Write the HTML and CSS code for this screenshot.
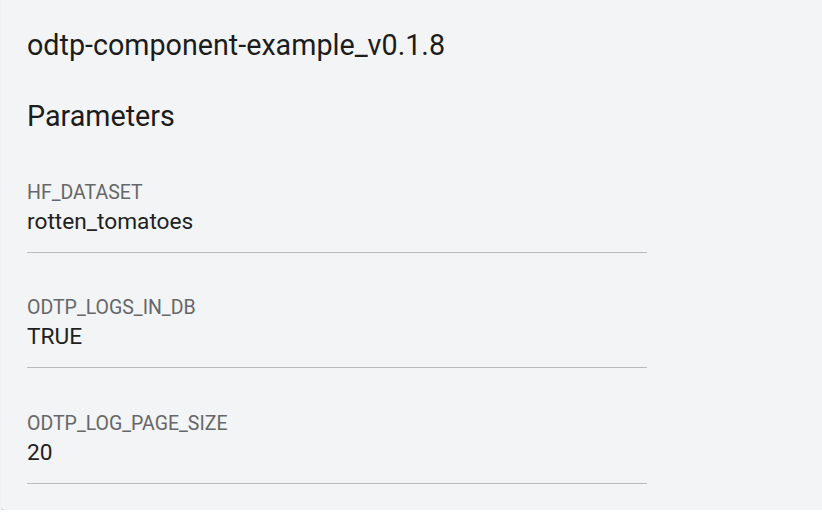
FILE: index.html
```html
<!DOCTYPE html>
<html>
<head>
<meta charset="utf-8">
<link rel="stylesheet" href="styles.css">
</head>
<body>
<div class="card">
  <h1 class="title">odtp-component-example_v0.1.8</h1>
  <h2 class="section">Parameters</h2>
  <div class="fields">
    <div class="field">
      <div class="label">HF_DATASET</div>
      <div class="value">rotten_tomatoes</div>
    </div>
    <div class="field">
      <div class="label">ODTP_LOGS_IN_DB</div>
      <div class="value">TRUE</div>
    </div>
    <div class="field">
      <div class="label">ODTP_LOG_PAGE_SIZE</div>
      <div class="value">20</div>
    </div>
  </div>
</div>
</body>
</html>
```
FILE: styles.css
```css
html, body {
  margin: 0;
  padding: 0;
  background: #ffffff;
  overflow: hidden;
}
body {
  font-family: Roboto, "Liberation Sans", sans-serif;
}
.card {
  margin: -10px -10px 0 1px;
  padding: 37.2px 0 26px 26px;
  background: #f3f4f6;
  border-radius: 4px;
  box-shadow: 0px 2px 1px -1px rgba(0,0,0,0.2), 0px 1px 1px 0px rgba(0,0,0,0.14), 0px 1px 3px 0px rgba(0,0,0,0.12);
}
.title {
  margin: 0;
  font-size: 28.7px;
  line-height: 36px;
  font-weight: 400;
  color: #1c1c1c;
}
.section {
  margin: 35.3px 0 0 0;
  font-size: 28.7px;
  line-height: 36px;
  font-weight: 400;
  color: #1c1c1c;
}
.fields {
  margin-top: 46.1px;
  display: flex;
  flex-direction: column;
  gap: 43.1px;
  width: 620px;
}
.field {
  padding-bottom: 16px;
  border-bottom: 1px solid #b9babc;
}
.label {
  font-size: 19.5px;
  line-height: 24px;
  color: #666768;
}
.value {
  margin-top: 3.4px;
  font-size: 22.7px;
  line-height: 28px;
  color: #1f1f1f;
}
```
